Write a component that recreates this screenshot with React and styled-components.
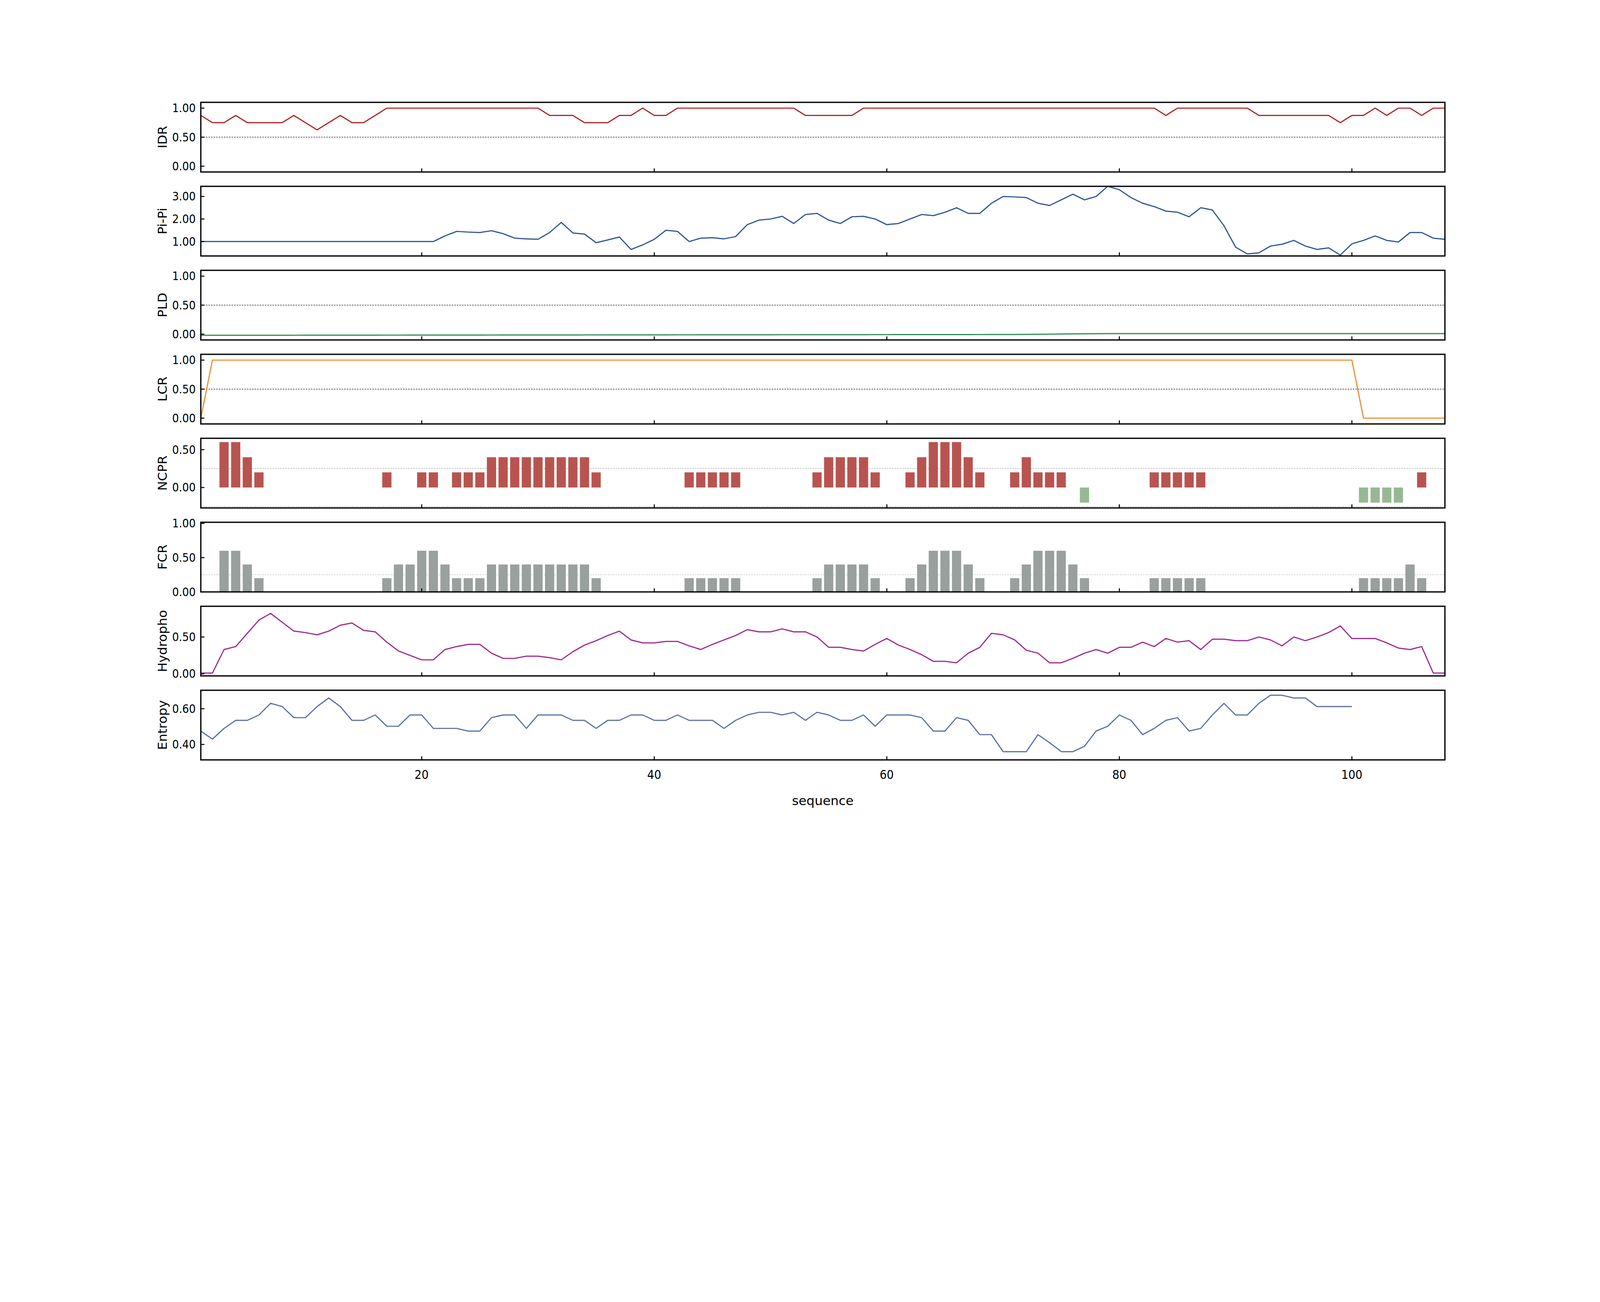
import React from "react";
import styled, { createGlobalStyle } from "styled-components";

const Global = createGlobalStyle`
  html, body { margin: 0; padding: 0; background: #fff; }
  body { width: 100vw; height: 100vh; overflow: hidden; }
`;

const W = 4860;
const H = 272;
const X0 = 1, X1 = 108;
const sx = (v) => ((v - X0) / (X1 - X0)) * W;

const Page = styled.div`
  width: 6250px;
  height: 3333px;
  box-sizing: border-box;
  padding: 400px 0 0 784px;
  display: flex;
  flex-direction: column;
  gap: 56px;
  font-family: "DejaVu Sans", sans-serif;
`;

const Row = styled.div`
  position: relative;
  width: ${W}px;
  height: ${H}px;
`;

const YLabel = styled.div`
  position: absolute;
  left: -150px;
  top: 50%;
  transform: translate(-50%, -50%) rotate(-90deg);
  font-size: 50px;
  line-height: 1;
  white-space: nowrap;
  color: #000;
`;

const Chart = styled.svg`
  display: block;
  overflow: visible;
`;

const XTickLabels = styled.div`
  position: relative;
  width: ${W}px;
  height: 60px;
  margin-top: -26px;
  font-family: "DejaVu Sans Condensed", "DejaVu Sans", sans-serif;
  font-stretch: condensed;
  font-size: 48px;
`;

const XTick = styled.span`
  position: absolute;
  top: 0;
  transform: translateX(-50%);
`;

const XLabel = styled.div`
  width: ${W}px;
  text-align: center;
  font-size: 50px;
  margin-top: -14px;
`;

const IDR = [.875,.75,.75,.875,.75,.75,.75,.75,.875,.75,.625,.75,.875,.75,.75,.875,1,1,1,1,1,1,1,1,1,1,1,1,1,1,.875,.875,.875,.75,.75,.75,.875,.875,1,.875,.875,1,1,1,1,1,1,1,1,1,1,1,.875,.875,.875,.875,.875,1,1,1,1,1,1,1,1,1,1,1,1,1,1,1,1,1,1,1,1,1,1,1,1,1,1,.875,1,1,1,1,1,1,1,.875,.875,.875,.875,.875,.875,.875,.75,.875,.875,1,.875,1,1,.875,1,1];
const PI = [1,1,1,1,1,1,1,1,1,1,1,1,1,1,1,1,1,1,1,1,1,1.25,1.45,1.42,1.4,1.48,1.35,1.15,1.12,1.1,1.4,1.85,1.38,1.33,.95,1.07,1.2,.65,.85,1.1,1.5,1.45,1.0,1.15,1.17,1.12,1.22,1.75,1.95,2.0,2.12,1.8,2.2,2.25,1.95,1.8,2.1,2.12,2.0,1.75,1.8,2.0,2.2,2.15,2.3,2.5,2.25,2.25,2.7,3.0,2.98,2.95,2.7,2.6,2.85,3.1,2.85,3.0,3.45,3.3,2.95,2.7,2.55,2.35,2.3,2.1,2.5,2.4,1.7,.75,.45,.5,.8,.88,1.05,.8,.65,.72,.4,.9,1.05,1.25,1.05,.98,1.4,1.4,1.15,1.1];
const PLD = Array.from({ length: 108 }, (_, i) => (i < 70 ? -0.02 + i * 0.0002 : i < 78 ? -0.006 + (i - 70) * 0.002 : 0.01));
const LCR = Array.from({ length: 108 }, (_, i) => (i === 0 ? 0 : i < 100 ? 1 : 0));
const HYD = [.01,.01,.33,.37,.55,.73,.82,.7,.58,.56,.53,.58,.66,.69,.59,.57,.43,.31,.25,.19,.19,.33,.37,.4,.4,.28,.21,.21,.24,.24,.22,.19,.3,.39,.45,.52,.58,.46,.42,.42,.44,.44,.38,.33,.4,.46,.52,.6,.57,.57,.61,.57,.57,.5,.36,.36,.33,.31,.4,.48,.39,.33,.26,.17,.17,.15,.28,.36,.55,.53,.46,.32,.28,.15,.15,.21,.28,.33,.28,.36,.36,.43,.37,.48,.43,.45,.33,.47,.47,.45,.45,.5,.46,.38,.5,.45,.5,.56,.65,.48,.48,.48,.42,.35,.33,.37,.01,.01];
const ENT = [.475,.43,.49,.535,.535,.565,.63,.612,.55,.55,.612,.66,.612,.535,.535,.565,.502,.502,.565,.565,.49,.49,.49,.475,.475,.55,.565,.565,.49,.565,.565,.565,.535,.535,.49,.535,.535,.565,.565,.535,.535,.565,.535,.535,.535,.49,.535,.565,.58,.58,.565,.58,.535,.58,.565,.535,.535,.565,.502,.565,.565,.565,.55,.475,.475,.55,.535,.455,.455,.36,.36,.36,.455,.41,.36,.36,.39,.475,.502,.565,.535,.455,.49,.535,.55,.475,.49,.565,.63,.565,.565,.63,.675,.675,.66,.66,.612,.612,.612,.612];

const setv = (pairs) => {
  const a = Array(108).fill(0);
  pairs.forEach(([from, to, v]) => { for (let i = from; i <= to; i++) a[i - 1] = v; });
  return a;
};
const NCPR = setv([[3,4,.6],[5,5,.4],[6,6,.2],[17,17,.2],[20,21,.2],[23,25,.2],[26,34,.4],[35,35,.2],[43,47,.2],[54,54,.2],[55,58,.4],[59,59,.2],[62,62,.2],[63,63,.4],[64,66,.6],[67,67,.4],[68,68,.2],[71,71,.2],[72,72,.4],[73,75,.2],[77,77,-.2],[83,87,.2],[101,104,-.2],[106,106,.2]]);
const FCR = setv([[3,4,.6],[5,5,.4],[6,6,.2],[17,17,.2],[18,19,.4],[20,21,.6],[22,22,.4],[23,25,.2],[26,34,.4],[35,35,.2],[43,47,.2],[54,54,.2],[55,58,.4],[59,59,.2],[62,62,.2],[63,63,.4],[64,66,.6],[67,67,.4],[68,68,.2],[71,71,.2],[72,72,.4],[73,75,.6],[76,76,.4],[77,77,.2],[83,87,.2],[101,104,.2],[105,105,.4],[106,106,.2]]);

const panels = [
  { label: "IDR", type: "line", data: IDR, color: "#b22222", ymin: -0.1, ymax: 1.1, ticks: [0, 0.5, 1], ref: [{ y: 0.5, c: "#000", w: 2 }] },
  { label: "Pi-Pi", type: "line", data: PI, color: "#2f5597", ymin: 0.36, ymax: 3.45, ticks: [1, 2, 3], ref: [] },
  { label: "PLD", type: "line", data: PLD, color: "#2e8b57", ymin: -0.1, ymax: 1.1, ticks: [0, 0.5, 1], ref: [{ y: 0.5, c: "#000", w: 2 }] },
  { label: "LCR", type: "line", data: LCR, color: "#f28a2e", ymin: -0.1, ymax: 1.1, ticks: [0, 0.5, 1], ref: [{ y: 0.5, c: "#000", w: 2 }] },
  { label: "NCPR", type: "bar", data: NCPR, pos: "#b85450", neg: "#96b994", ymin: -0.27, ymax: 0.65, ticks: [0, 0.5], ref: [{ y: 0.25, c: "#aaa", w: 2 }, { y: -0.25, c: "#aaa", w: 2 }] },
  { label: "FCR", type: "bar", data: FCR, pos: "#9aa09e", neg: "#9aa09e", ymin: 0, ymax: 1.015, ticks: [0, 0.5, 1], ref: [{ y: 0.25, c: "#bbb", w: 2 }] },
  { label: "Hydropho", type: "line", data: HYD, color: "#a0288f", ymin: -0.028, ymax: 0.917, ticks: [0, 0.5], ref: [] },
  { label: "Entropy", type: "line", data: ENT, color: "#5b6fa8", ymin: 0.314, ymax: 0.703, ticks: [0.4, 0.6], ref: [] },
];

const XT = [20, 40, 60, 80, 100];

function Panel({ p }) {
  const sy = (v) => H - ((v - p.ymin) / (p.ymax - p.ymin)) * H;
  const y0 = sy(0);
  return (
    <Row>
      <YLabel>{p.label}</YLabel>
      <Chart width={W} height={H} viewBox={`0 0 ${W} ${H}`}>
        <defs>
          <clipPath id={`c-${p.label}`}><rect x="0" y="0" width={W} height={H} /></clipPath>
        </defs>
        {p.ref.map((r, i) => (
          <line key={i} x1="0" x2={W} y1={sy(r.y)} y2={sy(r.y)} stroke={r.c} strokeWidth={r.w} strokeDasharray="6 4" />
        ))}
        <g clipPath={`url(#c-${p.label})`}>
          {p.type === "line" ? (
            <polyline fill="none" stroke={p.color} strokeWidth="4.5" strokeLinejoin="round"
              points={p.data.map((v, i) => `${sx(i + 1)},${sy(v)}`).join(" ")} />
          ) : (
            p.data.map((v, i) => v === 0 ? null : (
              <rect key={i} x={sx(i + 1) - 18} width="36"
                y={v > 0 ? sy(v) : y0} height={Math.abs(sy(v) - y0)}
                fill={v > 0 ? p.pos : p.neg} />
            ))
          )}
        </g>
        {p.ticks.map((t) => (
          <g key={t}>
            <line x1="0" x2="14" y1={sy(t)} y2={sy(t)} stroke="#000" strokeWidth="4" />
            <text x="-20" y={sy(t) + 16} textAnchor="end" fontSize="46"
              fontFamily="'DejaVu Sans Condensed', 'DejaVu Sans', sans-serif" style={{ fontStretch: "condensed" }}>{t.toFixed(2)}</text>
          </g>
        ))}
        {XT.map((t) => (
          <line key={t} x1={sx(t)} x2={sx(t)} y1={H} y2={H - 14} stroke="#000" strokeWidth="4" />
        ))}
        <rect x="0" y="0" width={W} height={H} fill="none" stroke="#000" strokeWidth="5" />
      </Chart>
    </Row>
  );
}

export default function App() {
  const k = typeof window !== "undefined" ? window.innerWidth / 6250 : 1;
  return (
    <>
      <Global />
      <Page style={{ zoom: k }}>
        {panels.map((p) => <Panel key={p.label} p={p} />)}
        <XTickLabels>
          {XT.map((t) => <XTick key={t} style={{ left: sx(t) }}>{t}</XTick>)}
        </XTickLabels>
        <XLabel>sequence</XLabel>
      </Page>
    </>
  );
}
